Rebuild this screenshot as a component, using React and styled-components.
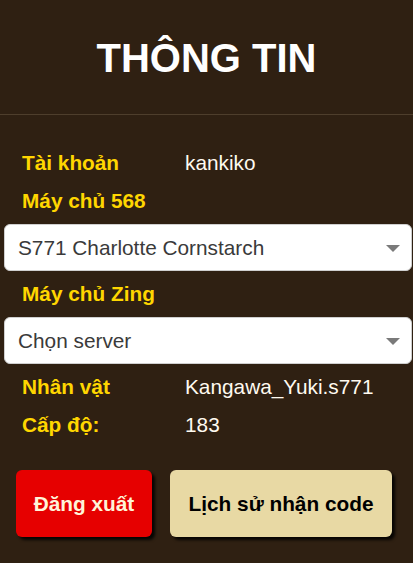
import React from "react";
import styled, { createGlobalStyle } from "styled-components";

const Global = createGlobalStyle`
  html, body { margin: 0; padding: 0; background: #2f2012; }
  body { font-family: "Liberation Sans", Arial, sans-serif; }
  * { box-sizing: border-box; }
`;

const Page = styled.div`
  width: 413px;
  min-height: 563px;
  background: #2f2012;
  font-family: "Liberation Sans", Arial, sans-serif;
`;

const Header = styled.header`
  height: 115px;
  border-bottom: 1px solid #4e3e2c;
  display: flex;
  justify-content: center;
  padding-top: 38px;
`;

const Title = styled.h1`
  margin: 0;
  font-size: 40px;
  line-height: 40px;
  font-weight: 700;
  color: #ffffff;
  letter-spacing: 0;
`;

const Body = styled.div`
  padding: 29px 1px 0 4px;
  display: flex;
  flex-direction: column;
`;

const Row = styled.div`
  display: flex;
  height: 38px;
  align-items: center;
  padding-left: 18px;
  font-size: 20.8px;
  line-height: 38px;
`;

const Label = styled.span`
  width: 163px;
  flex: none;
  color: #ffd600;
  font-weight: 700;
`;

const Value = styled.span`
  color: #fffaf0;
`;

const SelectBox = styled.div`
  margin: 4px 0;
  height: 47px;
  background: #ffffff;
  border: 1px solid #cfcfcf;
  border-radius: 6px;
  display: flex;
  align-items: center;
  justify-content: space-between;
  padding: 0 11px 0 13px;
  font-size: 20.8px;
  color: #3a3a3a;
`;

const Arrow = styled.svg`
  width: 14px;
  height: 7px;
  flex: none;
  margin-top: 2px;
`;

const Buttons = styled.div`
  display: flex;
  gap: 18px;
  padding-left: 12px;
  margin-top: 26px;
`;

const Button = styled.button`
  height: 67px;
  padding: 0 17px;
  border: none;
  border-radius: 6px;
  font-family: "Liberation Sans", Arial, sans-serif;
  font-size: 20.8px;
  font-weight: 700;
  background: ${(p) => (p.$variant === "danger" ? "#e60000" : "#e8d9a4")};
  color: ${(p) => (p.$variant === "danger" ? "#fff4d8" : "#000000")};
  width: ${(p) => p.$w}px;
  box-shadow: 3px 3px 3px rgba(0, 0, 0, 0.85);
  cursor: pointer;
`;

function Select({ children }) {
  return (
    <SelectBox>
      <span>{children}</span>
      <Arrow viewBox="0 0 14 7">
        <polygon points="0,0 14,0 7,7" fill="#7a7a7a" />
      </Arrow>
    </SelectBox>
  );
}

export default function App() {
  return (
    <Page>
      <Global />
      <Header>
        <Title>THÔNG TIN</Title>
      </Header>
      <Body>
        <Row>
          <Label>Tài khoản</Label>
          <Value>kankiko</Value>
        </Row>
        <Row>
          <Label>Máy chủ 568</Label>
        </Row>
        <Select>S771 Charlotte Cornstarch</Select>
        <Row>
          <Label>Máy chủ Zing</Label>
        </Row>
        <Select>Chọn server</Select>
        <Row>
          <Label>Nhân vật</Label>
          <Value>Kangawa_Yuki.s771</Value>
        </Row>
        <Row>
          <Label>Cấp độ:</Label>
          <Value>183</Value>
        </Row>
        <Buttons>
          <Button $variant="danger" $w={136}>Đăng xuất</Button>
          <Button $variant="light" $w={222}>Lịch sử nhận code</Button>
        </Buttons>
      </Body>
    </Page>
  );
}
